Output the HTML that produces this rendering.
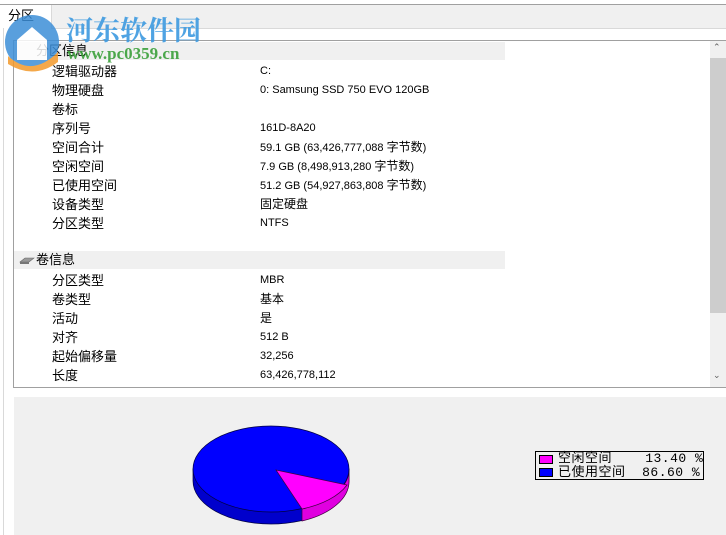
<!DOCTYPE html>
<html><head><meta charset="utf-8"><style>
*{margin:0;padding:0;box-sizing:border-box}
body{width:726px;height:535px;overflow:hidden;background:#fff;font-family:"Liberation Sans","Noto Sans CJK SC",sans-serif;font-size:13px;color:#000;position:relative}
.abs{position:absolute}
.row{position:absolute;height:19px;line-height:19px;white-space:nowrap}
.l{left:52px}.v{left:260px;font-size:11px}
.hdr{position:absolute;left:14px;width:491px;height:18px;background:#f0f0f0;line-height:18px}
</style></head><body>
<div class="abs" style="left:0;top:0;width:726px;height:4px;background:#fff"></div>
<div class="abs" style="left:0;top:4px;width:726px;height:1px;background:#a0a0a0"></div>
<div class="abs" style="left:0;top:5px;width:726px;height:24px;background:#f0f0f0"></div>
<div class="abs" style="left:0;top:28px;width:726px;height:1px;background:#d9d9d9"></div>
<div class="abs" style="left:0;top:5px;width:52px;height:24px;background:#fff;border-right:1px solid #d9d9d9"></div>
<div class="abs" style="left:8px;top:7px;line-height:18px;font-size:13px">分区</div>
<div class="abs" style="left:3px;top:28px;width:1px;height:507px;background:#d9d9d9"></div>

<div class="abs" style="left:13px;top:40px;width:713px;height:348px;border:1px solid #a0a0a0;border-right:none"></div>
<div class="abs" style="left:710px;top:41px;width:16px;height:346px;background:#f0f0f0"></div>
<div class="abs" style="left:710px;top:58px;width:16px;height:255px;background:#cdcdcd"></div>
<div class="abs" style="left:713px;top:42px;font-size:9px;color:#606060">&#8963;</div>
<div class="abs" style="left:713px;top:370px;font-size:9px;color:#606060">&#8964;</div>

<div class="hdr" style="top:42px"><span style="margin-left:22px">分区信息</span></div>
<div class="row l" style="top:62px">逻辑驱动器</div><div class="row v" style="top:62px">C:</div>
<div class="row l" style="top:81px">物理硬盘</div><div class="row v" style="top:81px">0: Samsung SSD 750 EVO 120GB</div>
<div class="row l" style="top:100px">卷标</div>
<div class="row l" style="top:119px">序列号</div><div class="row v" style="top:119px">161D-8A20</div>
<div class="row l" style="top:138px">空间合计</div><div class="row v" style="top:138px">59.1 GB (63,426,777,088 <span style="font-size:12px">字节数</span>)</div>
<div class="row l" style="top:157px">空闲空间</div><div class="row v" style="top:157px">7.9 GB (8,498,913,280 <span style="font-size:12px">字节数</span>)</div>
<div class="row l" style="top:176px">已使用空间</div><div class="row v" style="top:176px">51.2 GB (54,927,863,808 <span style="font-size:12px">字节数</span>)</div>
<div class="row l" style="top:195px">设备类型</div><div class="row v" style="top:195px;font-size:12px">固定硬盘</div>
<div class="row l" style="top:214px">分区类型</div><div class="row v" style="top:214px">NTFS</div>

<div class="hdr" style="top:251px"><svg class="abs" style="left:5px;top:5px" width="16" height="9"><path d="M1 6 L6 2 L15 2 L10 6 Z" fill="#999" stroke="#666" stroke-width="0.6"/><rect x="1" y="6" width="9" height="2" fill="#777"/></svg><span style="margin-left:22px">卷信息</span></div>
<div class="row l" style="top:271px">分区类型</div><div class="row v" style="top:271px">MBR</div>
<div class="row l" style="top:290px">卷类型</div><div class="row v" style="top:290px;font-size:12px">基本</div>
<div class="row l" style="top:309px">活动</div><div class="row v" style="top:309px;font-size:12px">是</div>
<div class="row l" style="top:328px">对齐</div><div class="row v" style="top:328px">512 B</div>
<div class="row l" style="top:347px">起始偏移量</div><div class="row v" style="top:347px">32,256</div>
<div class="row l" style="top:366px">长度</div><div class="row v" style="top:366px">63,426,778,112</div>

<div class="abs" style="left:14px;top:397px;width:712px;height:138px;background:#f0f0f0"></div>
<svg class="abs" style="left:0;top:0" width="726" height="535">
<path d="M193 469 L193 481 A78 43 0 0 0 349 481 L349 469 Z" fill="#0000cc" stroke="#000040" stroke-width="0.7"/>
<path d="M302 509 L302 521 A78 43 0 0 0 349 481 L349 469 A78 43 0 0 1 302 509 Z" fill="#e000e0" stroke="#400040" stroke-width="0.7"/>
<ellipse cx="271" cy="469" rx="78" ry="43" fill="#0000ff" stroke="#000040" stroke-width="0.7"/>
<path d="M276 470 L347 485 A78 43 0 0 1 302 509 Z" fill="#ff00ff" stroke="#400040" stroke-width="0.7"/>
</svg>
<div class="abs" style="left:535px;top:451px;width:169px;height:29px;border:1px solid #000;background:#f0f0f0"></div>
<div class="abs" style="left:539px;top:455px;width:14px;height:9px;background:#ff00ff;border:1px solid #000"></div>
<div class="abs" style="left:539px;top:468px;width:14px;height:9px;background:#0000ff;border:1px solid #000"></div>
<div class="abs" style="left:558px;top:452px;line-height:14px;font-size:13px;letter-spacing:0.5px;font-family:'Liberation Mono','Noto Sans CJK SC',monospace;white-space:pre">空闲空间    13.40 %
已使用空间  86.60 %</div>

<svg class="abs" style="left:2px;top:12px;opacity:.85" width="62" height="62">
<circle cx="30" cy="30" r="27" fill="#3d8fd8"/>
<path d="M15 28 L30 15 L45 28 L45 48 L15 48 Z" fill="#fff"/>
<path d="M6 44 Q30 66 56 40 L56 50 Q32 68 6 52Z" fill="#f39a2b"/>
</svg>
<div class="abs" style="left:66px;top:9px;font-size:27px;font-weight:bold;color:#3d9ae0;opacity:.9;font-family:'Noto Serif CJK SC','Noto Sans CJK SC',serif">河东软件园</div>
<div class="abs" style="left:67px;top:44px;font-size:17px;font-weight:bold;color:#3aa03a;opacity:.9;font-family:'Liberation Serif',serif">www.pc0359.cn</div>
</body></html>
